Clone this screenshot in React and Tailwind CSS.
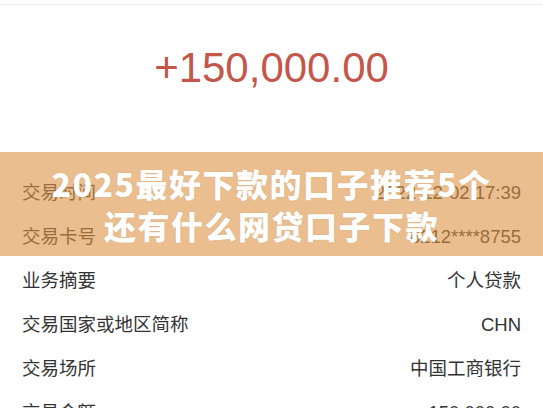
import React from "react";

const rows = [
  ["交易时间", "2022-12-02 17:39"],
  ["交易卡号", "6212****8755"],
  ["业务摘要", "个人贷款"],
  ["交易国家或地区简称", "CHN"],
  ["交易场所", "中国工商银行"],
  ["交易金额", "150,000.00"],
];

export default function App() {
  return (
    <div
      className="relative w-[543px] h-[408px] overflow-hidden bg-white"
      style={{ fontFamily: '"Liberation Sans","Noto Sans CJK SC",sans-serif' }}
    >
      <div className="h-[4px] bg-[#fdfdfd]" />
      <div className="h-[167px] border-t border-[#ececec] flex justify-center">
        <div className="mt-[40px] text-[42px] leading-[46px] text-[#c4564a]">
          +150,000.00
        </div>
      </div>
      <div className="flex flex-col">
        {rows.map(([k, v]) => (
          <div
            key={k}
            className="h-[44px] flex items-center justify-between px-[22px] text-[18.5px] text-[#333333]"
          >
            <span>{k}</span>
            <span>{v}</span>
          </div>
        ))}
      </div>
      <div className="absolute left-0 right-0 top-[152px] h-[104px] bg-[#de9344]/60 flex flex-col items-center justify-center">
        <div
          className="text-white font-black text-[32px] leading-[42px] tracking-[1.5px] text-center"
          style={{
            fontFamily: '"Noto Sans CJK SC",sans-serif',
            textShadow: "0 0 1px rgba(120,80,40,0.3)",
          }}
        >
          <div>2025最好下款的口子推荐5个</div>
          <div>还有什么网贷口子下款</div>
        </div>
      </div>
    </div>
  );
}
